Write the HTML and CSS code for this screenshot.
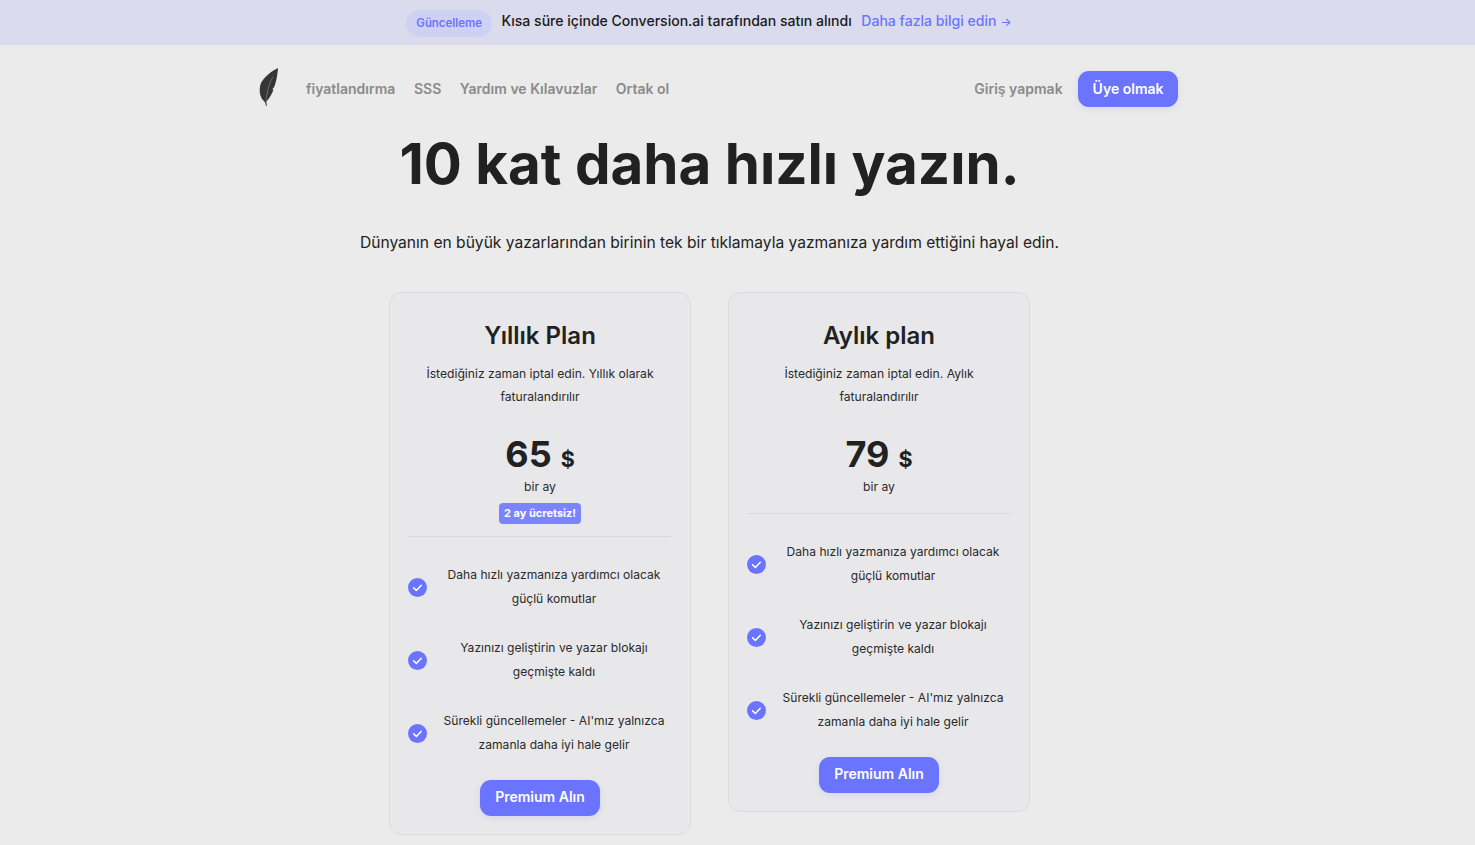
FILE: index.html
```html
<!DOCTYPE html>
<html lang="tr">
<head>
<meta charset="utf-8">
<title>Fiyatlandırma</title>
<link rel="stylesheet" href="styles.css">
</head>
<body>
<div class="banner">
  <span class="badge">Güncelleme</span>
  <span class="banner-text">Kısa süre içinde Conversion.ai tarafından satın alındı</span>
  <a class="banner-link">Daha fazla bilgi edin <span class="arrow">→</span></a>
</div>
<nav class="nav">
  <svg class="logo" viewBox="0 0 22 40" width="22" height="40"><path d="M20 1 C14 4 5 10 2.3 18 C1.2 23 1.5 28 4 32 L7.2 35.5 L8 39 L8.8 38.8 L8.3 34.5 C11 32 14 27 15.5 22.5 L14.2 22.2 L16.2 20 C18 16 19.5 8 20 1 Z" fill="#363636"/><path d="M15 10 C11 16 9 25 8 34" stroke="#8c8c8c" stroke-width=".6" fill="none"/></svg>
  <div class="nav-links">
    <a>fiyatlandırma</a><a>SSS</a><a>Yardım ve Kılavuzlar</a><a>Ortak ol</a>
  </div>
  <div class="nav-right">
    <a class="login">Giriş yapmak</a>
    <a class="btn">Üye olmak</a>
  </div>
</nav>
<main class="main">
  <h1 class="title">10 kat daha hızlı yazın.</h1>
  <p class="lead">Dünyanın en büyük yazarlarından birinin tek bir tıklamayla yazmanıza yardım ettiğini hayal edin.</p>
  <div class="cards">
    <section class="card">
      <h2 class="plan">Yıllık Plan</h2>
      <p class="desc">İstediğiniz zaman iptal edin. Yıllık olarak faturalandırılır</p>
      <div class="price"><span class="num">65</span><span class="cur">$</span></div>
      <div class="per">bir ay</div>
      <div class="free"><span class="free-tag">2 ay ücretsiz!</span></div>
      <ul class="features">
        <li class="feature"><svg class="check" viewBox="0 0 20 20"><circle cx="10" cy="10" r="10" fill="#6b74ff"/><path d="M6 10.4l2.8 2.7L14 7.6" stroke="#fff" stroke-width="1.6" fill="none" stroke-linecap="round" stroke-linejoin="round"/></svg><span>Daha hızlı yazmanıza yardımcı olacak güçlü komutlar</span></li>
        <li class="feature"><svg class="check" viewBox="0 0 20 20"><circle cx="10" cy="10" r="10" fill="#6b74ff"/><path d="M6 10.4l2.8 2.7L14 7.6" stroke="#fff" stroke-width="1.6" fill="none" stroke-linecap="round" stroke-linejoin="round"/></svg><span>Yazınızı geliştirin ve yazar blokajı geçmişte kaldı</span></li>
        <li class="feature"><svg class="check" viewBox="0 0 20 20"><circle cx="10" cy="10" r="10" fill="#6b74ff"/><path d="M6 10.4l2.8 2.7L14 7.6" stroke="#fff" stroke-width="1.6" fill="none" stroke-linecap="round" stroke-linejoin="round"/></svg><span>Sürekli güncellemeler - AI'mız yalnızca zamanla daha iyi hale gelir</span></li>
      </ul>
      <a class="btn cta">Premium Alın</a>
    </section>
    <section class="card">
      <h2 class="plan">Aylık plan</h2>
      <p class="desc">İstediğiniz zaman iptal edin. Aylık faturalandırılır</p>
      <div class="price"><span class="num">79</span><span class="cur">$</span></div>
      <div class="per per-last">bir ay</div>
      <ul class="features">
        <li class="feature"><svg class="check" viewBox="0 0 20 20"><circle cx="10" cy="10" r="10" fill="#6b74ff"/><path d="M6 10.4l2.8 2.7L14 7.6" stroke="#fff" stroke-width="1.6" fill="none" stroke-linecap="round" stroke-linejoin="round"/></svg><span>Daha hızlı yazmanıza yardımcı olacak güçlü komutlar</span></li>
        <li class="feature"><svg class="check" viewBox="0 0 20 20"><circle cx="10" cy="10" r="10" fill="#6b74ff"/><path d="M6 10.4l2.8 2.7L14 7.6" stroke="#fff" stroke-width="1.6" fill="none" stroke-linecap="round" stroke-linejoin="round"/></svg><span>Yazınızı geliştirin ve yazar blokajı geçmişte kaldı</span></li>
        <li class="feature"><svg class="check" viewBox="0 0 20 20"><circle cx="10" cy="10" r="10" fill="#6b74ff"/><path d="M6 10.4l2.8 2.7L14 7.6" stroke="#fff" stroke-width="1.6" fill="none" stroke-linecap="round" stroke-linejoin="round"/></svg><span>Sürekli güncellemeler - AI'mız yalnızca zamanla daha iyi hale gelir</span></li>
      </ul>
      <a class="btn cta">Premium Alın</a>
    </section>
  </div>
</main>
</body>
</html>
```
FILE: styles.css
```css
* { box-sizing: border-box; }
html, body { margin: 0; height: 845px; overflow: hidden; }
body { background: #ebebeb; font-family: Inter, "Noto Sans", sans-serif; color: #1f1f1f; }

.banner { height: 45px; background: #dbdbee; display: flex; align-items: center; justify-content: center; padding-right: 57px; gap: 9.5px; font-size: 14.05px; }
.badge { height: 27px; padding: 0 10px; border-radius: 14px; background: #cfd1f3; color: #6b74ff; font-size: 11.4px; font-weight: 600; display: flex; align-items: center; margin-top: 1px; }
.banner-text { color: #1a1a1a; font-weight: 500; margin-bottom: 5px; }
.banner-link { color: #6b74ff; font-weight: 500; margin-bottom: 5px; }
.arrow { font-size: 12px; }

.nav { height: 88px; width: 920px; margin-left: 258px; display: flex; align-items: center; }
.logo { flex: none; margin-bottom: 4px; }
.nav-links { display: flex; gap: 18.6px; margin-left: 26px; margin-bottom: 1px; font-size: 14px; font-weight: 600; color: #8a8a8a; }
.nav-right { margin-left: auto; display: flex; align-items: center; gap: 15.5px; font-size: 14px; font-weight: 600; }
.login { color: #8a8a8a; margin-bottom: 1px; }
.btn { display: inline-flex; align-items: center; justify-content: center; height: 36px; padding: 0 14.5px 2px; background: #6b74ff; color: #fff; border-radius: 11px; font-weight: 600; font-size: 14px; box-shadow: 0 2px 6px rgba(107,116,255,.15); }

.main { width: 1419px; display: flex; flex-direction: column; align-items: center; }
.title { margin: 0; font-size: 56.5px; line-height: 62px; font-weight: 700; color: #212121; }
.lead { margin: 35px 0 0; font-size: 15.6px; line-height: 26px; color: #222; }

.cards { margin-top: 36px; display: flex; gap: 37px; align-items: flex-start; }
.card { width: 302px; border: 1px solid #dcdcdf; border-radius: 12px; background: #e8e8ea; padding: 27px 18px 18px; display: flex; flex-direction: column; align-items: center; }
.plan { margin: 0; font-size: 24px; line-height: 32px; font-weight: 600; color: #212121; }
.desc { margin: 10px 0 0; width: 240px; text-align: center; font-size: 12.15px; line-height: 23px; color: #2a2a2a; }
.price { margin-top: 24px; display: flex; align-items: baseline; gap: 9px; height: 44px; }
.num { font-size: 36px; line-height: 44px; font-weight: 700; color: #212121; }
.cur { font-size: 21.5px; font-weight: 700; color: #212121; }
.per { margin-top: 2px; font-size: 12.2px; line-height: 18px; color: #2a2a2a; }
.per-last { margin-bottom: 5px; }
.free { margin-top: 7px; }
.free-tag { display: block; height: 21px; line-height: 20px; padding: 0 4.5px; border-radius: 4px; background: #7b83ff; color: #fff; font-size: 11px; font-weight: 700; }
.features { list-style: none; margin: 12px 1px 0 0; padding: 26px 0 0; width: 263px; border-top: 1px solid #d9d9dc; display: flex; flex-direction: column; gap: 26px; }
.feature { display: flex; align-items: center; gap: 10px; font-size: 12.1px; line-height: 23.5px; text-align: center; color: #2a2a2a; }
.feature span { flex: 1; }
.check { width: 19px; height: 19px; flex: none; margin-top: 2px; }
.cta { margin-top: 24px; height: 35.5px; padding: 0 15px 2px; }
```
